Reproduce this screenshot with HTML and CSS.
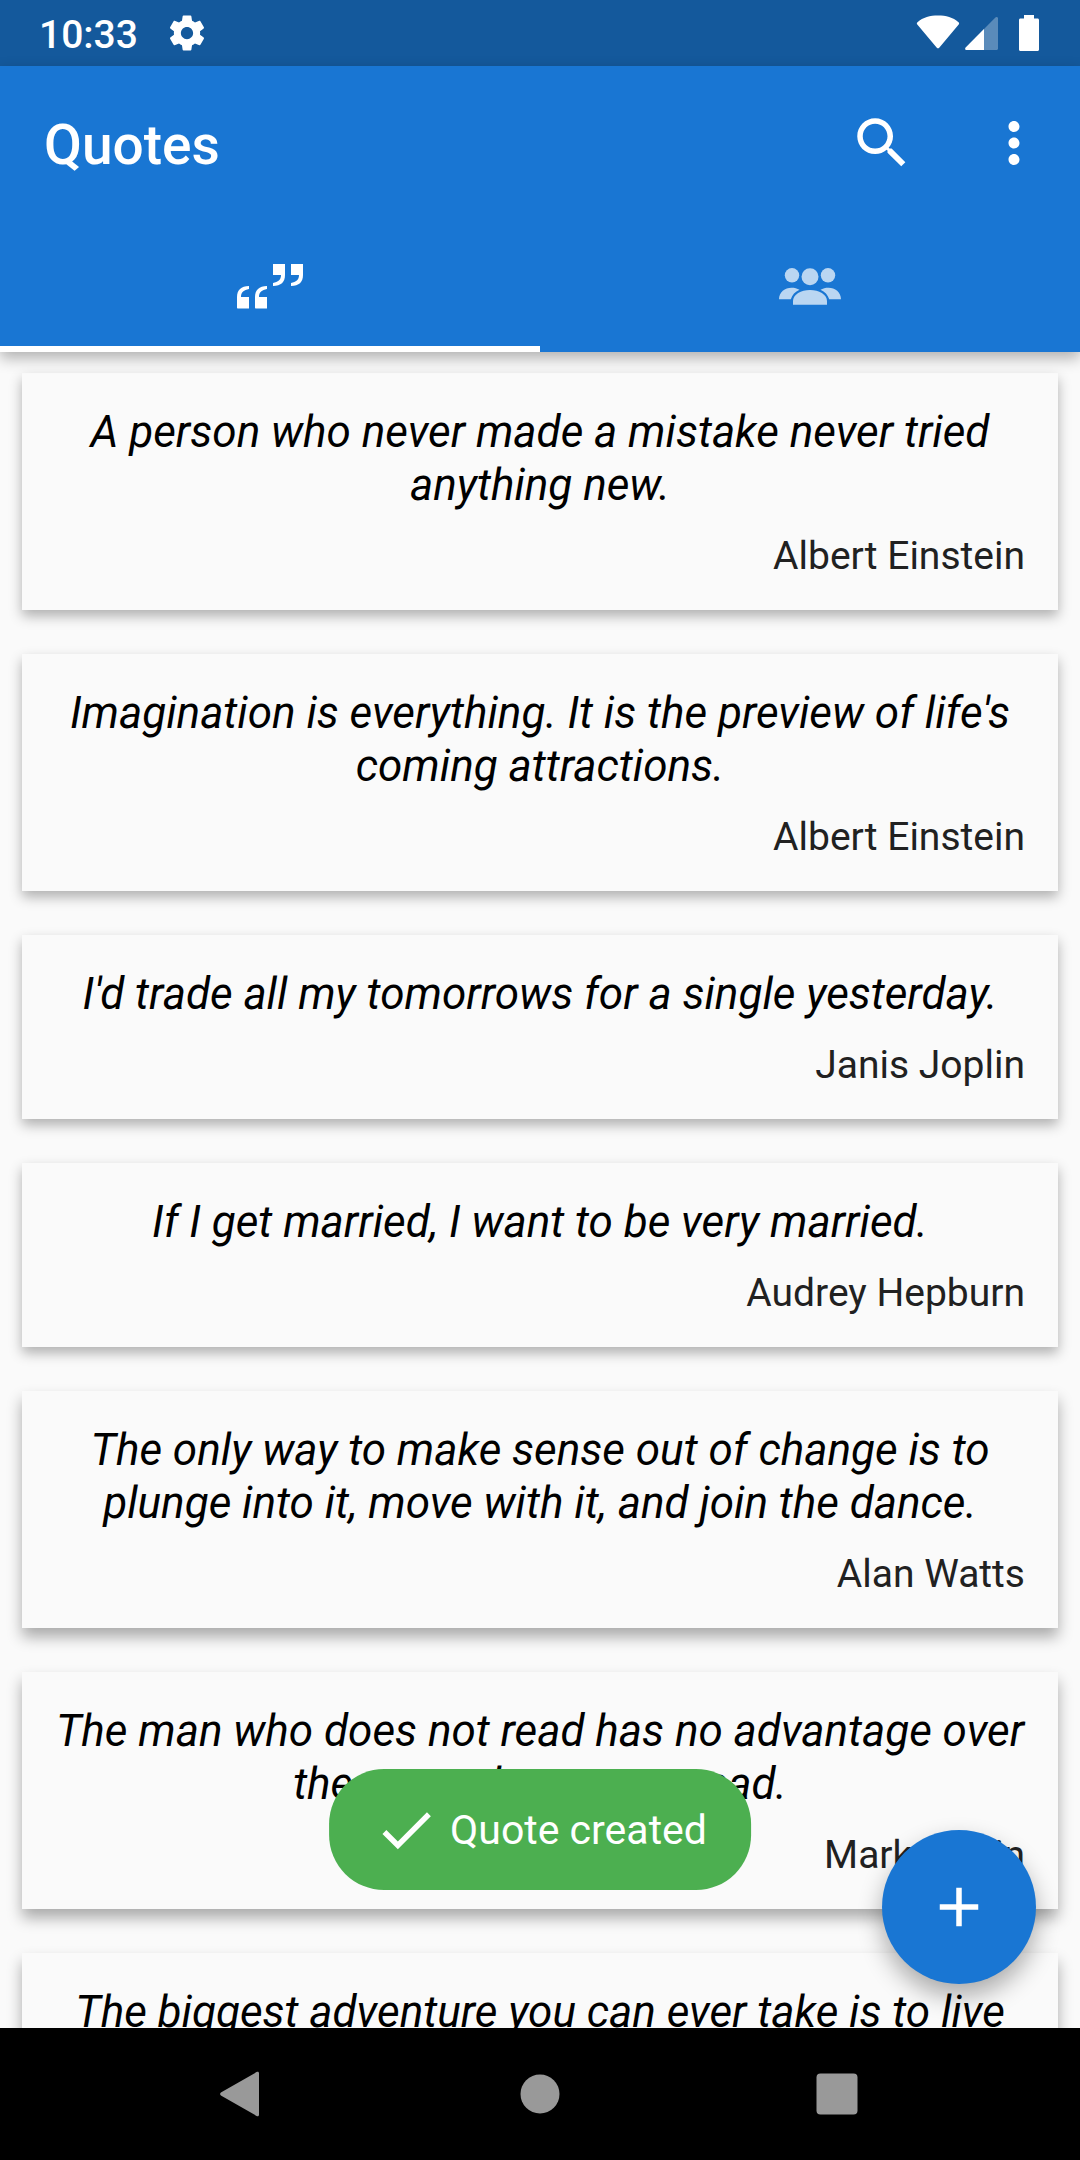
FILE: index.html
```html
<!DOCTYPE html>
<html lang="en">
<head>
<meta charset="utf-8">
<meta name="viewport" content="width=device-width, initial-scale=1">
<title>Quotes</title>
<link rel="stylesheet" href="styles.css">
</head>
<body>
<div class="status-bar">
  <span class="clock">10:33</span>
  <svg class="gear" viewBox="0 0 24 24" aria-hidden="true"><path d="M19.43 12.98c.04-.32.07-.64.07-.98s-.03-.66-.07-.98l2.11-1.65c.19-.15.24-.42.12-.64l-2-3.46c-.12-.22-.39-.3-.61-.22l-2.49 1c-.52-.4-1.08-.73-1.69-.98l-.38-2.65C14.46 2.18 14.25 2 14 2h-4c-.25 0-.46.18-.49.42l-.38 2.65c-.61.25-1.17.59-1.69.98l-2.49-1c-.23-.09-.49 0-.61.22l-2 3.46c-.13.22-.07.49.12.64l2.11 1.65c-.04.32-.07.65-.07.98s.03.66.07.98l-2.11 1.65c-.19.15-.24.42-.12.64l2 3.46c.12.22.39.3.61.22l2.49-1c.52.4 1.08.73 1.69.98l.38 2.65c.03.24.24.42.49.42h4c.25 0 .46-.18.49-.42l.38-2.65c.61-.25 1.17-.59 1.69-.98l2.49 1c.23.09.49 0 .61-.22l2-3.46c.12-.22.07-.49-.12-.64l-2.11-1.65zM12 15.5c-1.93 0-3.5-1.57-3.5-3.5s1.570-3.500 3.500-3.500 3.500 1.570 3.500 3.500-1.570 3.500-3.500 3.500z"/></svg>
  <div class="indicators">
    <svg class="wifi" viewBox="0 0 44 36" aria-hidden="true"><path d="M1.500 7.200C7 2.300 14 .5 22 .5s15 1.800 20.500 6.700c.8.700.8 1.500.2 2.300L23.200 32.700c-.7.800-1.700.8-2.400 0L1.300 9.500c-.6-.8-.6-1.600.2-2.300z"/></svg>
    <svg class="signal" viewBox="0 0 34 36" aria-hidden="true"><path opacity=".3" d="M31.500 2c1 0 1.500.6 1.500 1.500v30c0 .9-.6 1.500-1.500 1.500H1.800C.2 35-.3 33.600.7 32.500l29.700-30c.3-.3.7-.5 1.100-.5z"/><path d="M19 14v21H1.800C.2 35-.3 33.600.7 32.500z"/></svg>
    <svg class="battery" viewBox="0 0 20 36" aria-hidden="true"><path d="M5 0h10v3.500h3.500c.9 0 1.500.6 1.500 1.500v29.500c0 .9-.6 1.500-1.500 1.500h-17C.6 36 0 35.400 0 34.500V5c0-.9.6-1.500 1.500-1.500H5z"/></svg>
  </div>
</div>

<header class="app-header">
  <div class="toolbar">
    <h1 class="title">Quotes</h1>
    <button class="tool-button" type="button" aria-label="Search">
      <svg class="icon" viewBox="0 0 24 24" aria-hidden="true"><path d="M15.500 14h-.79l-.28-.27C15.410 12.590 16 11.110 16 9.500 16 5.910 13.090 3 9.500 3S3 5.910 3 9.500 5.910 16 9.500 16c1.610 0 3.090-.59 4.230-1.570l.27.28v.79l5 4.990L20.490 19l-4.990-5zm-6 0C7.010 14 5 11.990 5 9.500S7.010 5 9.500 5 14 7.010 14 9.500 11.990 14 9.500 14z"/></svg>
    </button>
    <button class="tool-button" type="button" aria-label="More options">
      <svg class="icon" viewBox="0 0 24 24" aria-hidden="true"><path d="M12 8c1.100 0 2-.9 2-2s-.9-2-2-2-2 .9-2 2 .9 2 2 2zm0 2c-1.100 0-2 .9-2 2s.9 2 2 2 2-.9 2-2-.9-2-2-2zm0 6c-1.100 0-2 .9-2 2s.9 2 2 2 2-.9 2-2-.9-2-2-2z"/></svg>
    </button>
  </div>
  <nav class="tabs">
    <button class="tab tab-active" type="button" aria-label="Quotes">
      <svg class="quotes-icon" viewBox="0 0 66 45" aria-hidden="true">
        <path d="M12 22v3c-5 1-8 3-8 8h8v11.500H1c-.6 0-1-.4-1-1V33c0-7 4-11 12-11z"/>
        <path d="M30 22v3c-5 1-8 3-8 8h8v11.500H19c-.6 0-1-.4-1-1V33c0-7 4-11 12-11z"/>
        <path d="M36 22v-3c5-1 8-3 8-8h-8V0h12v11c0 7-4 11-12 11z"/>
        <path d="M54 22v-3c5-1 8-3 8-8h-8V0h12v11c0 7-4 11-12 11z"/>
      </svg>
    </button>
    <button class="tab" type="button" aria-label="Authors">
      <svg class="people-icon" viewBox="0 0 62 37" aria-hidden="true">
        <circle cx="13" cy="7.300" r="7.200"/><circle cx="49" cy="7.300" r="7.200"/><circle cx="31" cy="8.800" r="8.500"/>
        <path d="M0 31.300C0 24 6 19.700 12.500 19.700c3 0 5.700.6 8 2.100-4.500 2-7.300 5-8.700 9.500z"/>
        <path d="M62 31.300C62 24 56 19.700 49.500 19.700c-3 0-5.700.6-8 2.100 4.500 2 7.300 5 8.700 9.500z"/>
        <path d="M14 36.700V33c0-6.500 8-11 17-11s17 4.500 17 11v3.700z"/>
      </svg>
    </button>
  </nav>
</header>

<main class="content">
  <ul class="quote-list">
    <li class="card"><p class="quote">A person who never made a mistake never tried anything new.</p><p class="author">Albert Einstein</p></li>
    <li class="card"><p class="quote">Imagination is everything. It is the preview of life's coming attractions.</p><p class="author">Albert Einstein</p></li>
    <li class="card"><p class="quote">I'd trade all my tomorrows for a single yesterday.</p><p class="author">Janis Joplin</p></li>
    <li class="card"><p class="quote">If I get married, I want to be very married.</p><p class="author">Audrey Hepburn</p></li>
    <li class="card"><p class="quote">The only way to make sense out of change is to plunge into it, move with it, and join the dance.</p><p class="author">Alan Watts</p></li>
    <li class="card"><p class="quote">The man who does not read has no advantage over the man who cannot read.</p><p class="author">Mark Twain</p></li>
    <li class="card"><p class="quote">The biggest adventure you can ever take is to live the life of your dreams.</p><p class="author">Oprah Winfrey</p></li>
  </ul>
  <div class="toast" role="status">
    <svg class="icon" viewBox="0 0 24 24" aria-hidden="true"><path d="M9 16.170L4.830 12l-1.420 1.410L9 19 21 7l-1.410-1.410z"/></svg>
    <span>Quote created</span>
  </div>
  <button class="fab" type="button" aria-label="Add quote">
    <svg class="icon" viewBox="0 0 24 24" aria-hidden="true"><path d="M19 13h-6v6h-2v-6H5v-2h6V5h2v6h6v2z"/></svg>
  </button>
</main>

<nav class="system-nav">
  <button class="nav-button" type="button" aria-label="Back">
    <svg class="nav-icon" viewBox="0 0 46 46" aria-hidden="true"><path d="M1.300 21.200 36.500 1.100c1.500-.9 2.500-.2 2.500 1.400v41c0 1.600-1 2.300-2.500 1.400L1.300 24.800c-1.600-.9-1.600-2.700 0-3.600z"/></svg>
  </button>
  <button class="nav-button" type="button" aria-label="Home">
    <svg class="nav-icon" viewBox="0 0 46 46" aria-hidden="true"><circle cx="23" cy="23" r="19.500"/></svg>
  </button>
  <button class="nav-button" type="button" aria-label="Recent apps">
    <svg class="nav-icon" viewBox="0 0 46 46" aria-hidden="true"><rect x="2.500" y="2.500" width="41" height="41" rx="4"/></svg>
  </button>
</nav>
</body>
</html>
```

FILE: styles.css
```css
* {
  box-sizing: border-box;
}

body {
  margin: 0;
  height: 100vh;
  display: flex;
  flex-direction: column;
  overflow: hidden;
  background: #fafafa;
  color: #000;
  font-family: Roboto, sans-serif;
}

button {
  padding: 0;
  border: 0;
  background: none;
  color: inherit;
  font: inherit;
}

svg {
  display: block;
  fill: currentColor;
}

.icon {
  width: 66px;
  height: 66px;
}

/* Status bar */
.status-bar {
  flex: none;
  display: flex;
  align-items: center;
  height: 66px;
  padding: 0 41px 0 39px;
  background: #14599c;
  color: #fff;
}

.clock {
  padding-top: 4px;
  font-size: 39px;
  font-weight: 500;
  line-height: 48px;
}

.gear {
  width: 42px;
  height: 42px;
  margin-left: 28px;
}

.indicators {
  display: flex;
  align-items: center;
  margin-left: auto;
}

.wifi {
  width: 44px;
  height: 36px;
}

.signal {
  width: 34px;
  height: 36px;
  margin: 0 20px 0 5px;
}

.battery {
  width: 20px;
  height: 36px;
}

/* App header */
.app-header {
  flex: none;
  position: relative;
  z-index: 1;
  background: #1976d3;
  color: #fff;
  box-shadow: 0 6px 14px rgba(0, 0, 0, 0.3);
}

.toolbar {
  display: flex;
  align-items: center;
  height: 154px;
  padding-left: 44px;
}

.title {
  flex: 1;
  margin: 0;
  padding-top: 4px;
  font-size: 55px;
  font-weight: 500;
  line-height: 64px;
}

.tool-button {
  display: flex;
  align-items: center;
  justify-content: center;
  width: 132px;
  height: 132px;
}

.tabs {
  display: flex;
}

.tab {
  flex: 1;
  display: flex;
  align-items: center;
  justify-content: center;
  height: 132px;
  color: rgba(255, 255, 255, 0.7);
}

.tab-active {
  box-shadow: inset 0 -6px #fff;
  color: #fff;
}

.quotes-icon {
  width: 66px;
  height: 45px;
}

.people-icon {
  width: 62px;
  height: 37px;
}

/* Quote list */
.content {
  flex: 1;
  position: relative;
  min-height: 0;
  overflow: hidden;
}

.quote-list {
  display: flex;
  flex-direction: column;
  gap: 44px;
  margin: 0;
  padding: 21px 22px;
  list-style: none;
}

.card {
  display: flex;
  flex-direction: column;
  gap: 21px;
  padding: 33px 33px 31px;
  background: #fafafa;
  box-shadow: 0 6px 12px rgba(0, 0, 0, 0.3);
}

.card:nth-child(n+5) {
  box-shadow: 0 9px 14px rgba(0, 0, 0, 0.32);
}

.quote {
  margin: 0;
  font-size: 44px;
  font-style: italic;
  line-height: 53px;
  text-align: center;
}

.author {
  margin: 0;
  color: #212121;
  font-size: 39px;
  line-height: 46px;
  text-align: right;
}

/* Floating elements */
.toast {
  position: absolute;
  bottom: 138px;
  left: 50%;
  display: flex;
  align-items: center;
  gap: 11px;
  padding: 28px 44px 27px;
  border-radius: 55px;
  background: #4caf50;
  color: #fff;
  font-size: 41px;
  line-height: 50px;
  white-space: nowrap;
  transform: translateX(-50%);
}

.fab {
  position: absolute;
  right: 44px;
  bottom: 44px;
  display: flex;
  align-items: center;
  justify-content: center;
  width: 154px;
  height: 154px;
  border-radius: 50%;
  background: #1976d3;
  color: #fff;
  box-shadow: 0 12px 24px rgba(0, 0, 0, 0.32);
}

/* System navigation */
.system-nav {
  flex: none;
  display: flex;
  justify-content: center;
  height: 132px;
  background: #000;
  color: #999;
}

.nav-button {
  display: flex;
  align-items: center;
  justify-content: center;
  width: 297px;
}

.nav-icon {
  width: 46px;
  height: 46px;
}
```
